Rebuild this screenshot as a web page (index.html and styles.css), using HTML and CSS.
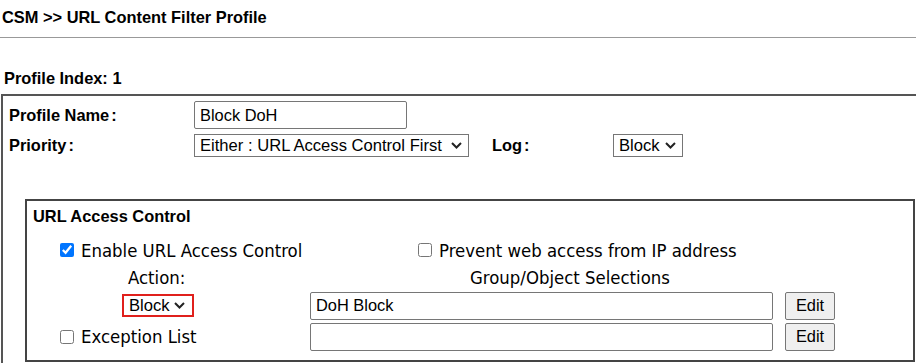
FILE: index.html
```html
<!DOCTYPE html>
<html lang="en">
<head>
    <meta charset="UTF-8">
    <title>CSM - URL Content Filter Profile</title>
    <link rel="stylesheet" href="styles.css">
</head>
<body>
    <div class="page-title">CSM &gt;&gt; URL Content Filter Profile</div>

    <div class="profile-index">Profile Index: 1</div>

    <div class="profile-box">
        <div class="form-row">
            <span class="label">Profile Name<span class="colon">:</span></span>
            <input type="text" class="text-input name-input" value="Block DoH">
        </div>
        <div class="form-row">
            <span class="label">Priority<span class="colon">:</span></span>
            <select class="select priority-select">
                <option>Either : URL Access Control First</option>
            </select>
            <span class="label log-label">Log<span class="colon">:</span></span>
            <select class="select log-select">
                <option>Block</option>
            </select>
        </div>

        <div class="section">
            <div class="section-title">URL Access Control</div>
            <div class="section-grid">
                <label class="check"><input type="checkbox" checked> Enable URL Access Control</label>
                <label class="check prevent"><input type="checkbox"> Prevent web access from IP address</label>

                <div class="action-head">Action:</div>
                <div class="group-head">Group/Object Selections</div>

                <div class="action-cell">
                    <select class="select action-select">
                        <option>Block</option>
                    </select>
                </div>
                <input type="text" class="text-input object-input" value="DoH Block">
                <button class="btn">Edit</button>

                <label class="check"><input type="checkbox"> Exception List</label>
                <input type="text" class="text-input object-input" value="">
                <button class="btn">Edit</button>
            </div>
        </div>
    </div>
</body>
</html>
```

FILE: styles.css
```css
* {
    box-sizing: border-box;
}

body {
    margin: 0;
    font-family: "Liberation Sans", Arial, sans-serif;
    font-size: 16.4px;
    color: #000;
    background: #fff;
    overflow: hidden;
}

.page-title {
    font-weight: bold;
    line-height: 19px;
    padding: 8px 2px 10px;
    border-bottom: 1px solid #999;
}

.profile-index {
    font-weight: bold;
    line-height: 19px;
    padding: 31px 4px 6px;
}

.profile-box {
    margin-left: 1px;
    width: 940px;
    height: 300px;
    border: 2px solid #555;
    padding: 5px 6px 0;
}

.form-row {
    display: flex;
    align-items: center;
    margin-bottom: 5px;
}

.label {
    font-weight: bold;
    width: 185px;
}

.colon {
    margin-left: 2px;
}

.log-label {
    width: 121px;
    margin-left: 23px;
}

.text-input {
    font-family: "Liberation Sans", Arial, sans-serif;
    font-size: 16.4px;
    border: 1px solid #767676;
    border-radius: 2px;
    padding: 2px 5px;
    background: #fff;
    color: #000;
}

.name-input {
    width: 213px;
    height: 28px;
}

/* chevron drawn as svg so it looks like the windows one */
.select {
    appearance: none;
    font-family: "Liberation Sans", Arial, sans-serif;
    font-size: 16.6px;
    height: 23px;
    padding: 0 22px 0 5px;
    border: 1px solid #767676;
    border-radius: 0;
    color: #000;
    background: #fff url("data:image/svg+xml,%3Csvg xmlns='http://www.w3.org/2000/svg' width='11' height='7' viewBox='0 0 11 7'%3E%3Cpath d='M1 1l4.5 4.5L10 1' fill='none' stroke='%23222' stroke-width='2'/%3E%3C/svg%3E") no-repeat right 6px center;
}

.priority-select {
    width: 275px;
}

.log-select {
    width: 70px;
}

.section {
    margin: 42px 0 0 16px;
    width: 890px;
    border: 2px solid #444;
    padding: 6px 6px 8px;
}

.section-title {
    font-weight: bold;
    line-height: 19px;
    margin-bottom: 10px;
}

.section-grid {
    display: grid;
    grid-template-columns: 250px 475px 50px;
    grid-template-rows: 28px 26px 31px 31px;
    align-items: center;
    padding-left: 27px;
    font-family: Tahoma, "DejaVu Sans Condensed", "DejaVu Sans", sans-serif;
    font-size: 18.4px;
}

.check {
    display: flex;
    align-items: center;
    gap: 7px;
}

.check input {
    margin: 0;
    width: 14px;
    height: 14px;
}

.prevent {
    grid-column: 2 / 4;
    padding-left: 108px;
}

.action-head {
    padding-left: 68px;
}

.group-head {
    padding-left: 160px;
}

.action-cell {
    grid-column: 1;
    padding-left: 62px;
}

.action-select {
    width: 72px;
    border: 2px solid #e0201c;
    background-position: right 7px center;
}

.object-input {
    width: 463px;
    height: 28px;
}

.btn {
    width: 50px;
    height: 28px;
    padding: 0;
    font-family: "Liberation Sans", Arial, sans-serif;
    font-size: 16.4px;
    background: #efefef;
    color: #000;
    border: 1px solid #767676;
    border-radius: 2px;
}
```
